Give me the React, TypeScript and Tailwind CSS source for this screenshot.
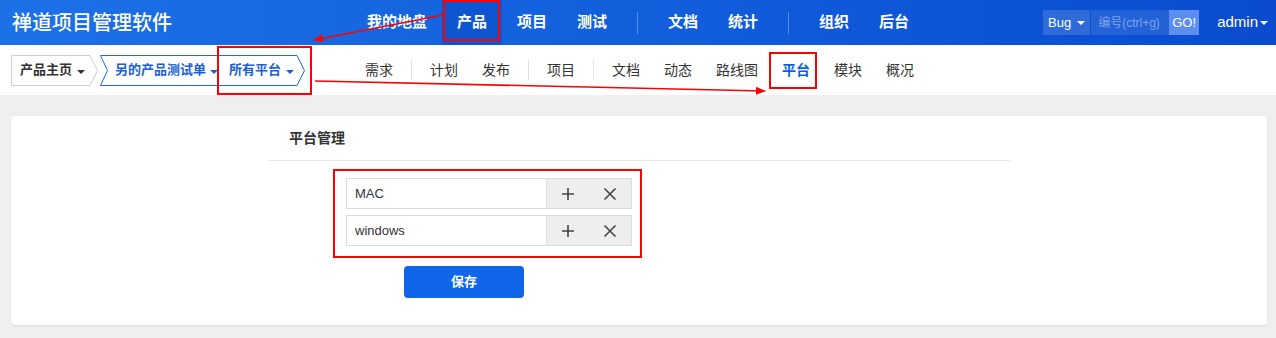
import React from 'react';

const cjk = "font-['Liberation_Sans','Noto_Sans_CJK_SC',sans-serif]";

const topNav = [
    { label: '我的地盘' },
    { label: '产品', active: true },
    { label: '项目' },
    { label: '测试' },
    { sep: true },
    { label: '文档' },
    { label: '统计' },
    { sep: true },
    { label: '组织' },
    { label: '后台' },
];

const subNav = [
    { label: '需求' },
    { sep: true },
    { label: '计划' },
    { label: '发布' },
    { sep: true },
    { label: '项目' },
    { sep: true },
    { label: '文档' },
    { label: '动态' },
    { label: '路线图' },
    { label: '平台', active: true },
    { label: '模块' },
    { label: '概况' },
];

const platforms = ['MAC', 'windows'];

const Caret = () => (
    <span className="inline-block w-0 h-0 border-x-[4px] border-x-transparent border-t-[4px] border-t-current" />
);

export default function App() {
    return (
        <div className={`relative w-[1276px] h-[338px] overflow-hidden bg-[#efefef] ${cjk}`}>
            {/* header */}
            <header className="grid grid-cols-[1fr_auto_1fr] items-center h-[45px] bg-linear-to-r from-[#1d71e7] to-[#0a4bd0] text-white">
                <div className="pl-[12px] text-[20px] font-medium leading-none">禅道项目管理软件</div>
                <nav className="flex items-center h-full">
                    {topNav.map((item, i) =>
                        item.sep ? (
                            <span key={i} className="mx-[15px] w-px h-[22px] bg-white/30" />
                        ) : (
                            <a
                                key={i}
                                className={`flex items-center h-full px-[15px] text-[15px] font-bold ${item.active ? 'bg-[#0d56cf]' : ''}`}
                            >
                                {item.label}
                            </a>
                        )
                    )}
                </nav>
                <div className="flex items-center justify-end pr-[8px]">
                    <div className="flex items-center h-[25px]">
                        <div className="flex items-center gap-[6px] h-full px-[5px] bg-white/15 text-[13px] font-medium">
                            Bug <Caret />
                        </div>
                        <div className="flex items-center h-full w-[78px] ml-px pl-[7px] bg-white/10 text-[12px] text-[#7ea3ea]">
                            编号(ctrl+g)
                        </div>
                        <div className="flex items-center justify-center h-full w-[30px] bg-[#5b8ef0] text-[13px]">GO!</div>
                    </div>
                    <div className="flex items-center gap-[2px] ml-[18px] text-[15px]">
                        admin <Caret />
                    </div>
                </div>
            </header>

            {/* sub navigation */}
            <div className="grid grid-cols-[1fr_auto_1fr] items-center h-[50px] bg-white">
                <div className="flex items-center pl-[11px] h-[31px] text-[13px] font-bold">
                    <div className="relative flex items-center gap-[5px] w-[88px] h-full pl-[9px] text-[#333]">
                        <svg className="absolute inset-0" width="88" height="31" viewBox="0 0 88 31">
                            <path d="M0.5 0.5 H79 L86.5 15.5 L79 30.5 H0.5 Z" fill="white" stroke="#cfcfcf" />
                        </svg>
                        <span className="relative">产品主页</span>
                        <span className="relative"><Caret /></span>
                    </div>
                    <div className="relative flex items-center w-[206px] h-full ml-[1px] pl-[15px] font-semibold text-[#1b5fd9]">
                        <svg className="absolute inset-0" width="206" height="31" viewBox="0 0 206 31">
                            <path d="M0.5 0.5 H197 L204.5 15.5 L197 30.5 H0.5 L7.5 15.5 Z" fill="white" stroke="#1d68e3" />
                        </svg>
                        <span className="relative">另的产品测试单</span>
                        <span className="relative ml-[4px]"><Caret /></span>
                        <span className="relative ml-[11px]">所有平台</span>
                        <span className="relative ml-[5px]"><Caret /></span>
                    </div>
                </div>
                <nav className="flex items-center pl-[3px]">
                    {subNav.map((item, i) =>
                        item.sep ? (
                            <span key={i} className="mx-[6px] w-px h-[20px] bg-[#e2e2e2]" />
                        ) : (
                            <a
                                key={i}
                                className={`px-[12px] text-[14px] ${item.active ? 'font-bold text-[#0c5fe0]' : 'text-[#333]'}`}
                            >
                                {item.label}
                            </a>
                        )
                    )}
                </nav>
                <div />
            </div>

            {/* main */}
            <main className="pt-[21px] pl-[11px] pr-[9px]">
                <div className="h-[209px] bg-white rounded-[4px] shadow-[0_1px_2px_rgba(0,0,0,0.08)]">
                    <div className="w-[742px] mx-auto">
                        <div className="flex items-center h-[45px] pl-[21px] border-b border-[#e8e8e8] text-[14px] font-bold text-[#333]">
                            平台管理
                        </div>
                        <div className="flex flex-col gap-[6px] w-[286px] mt-[17px] ml-[78px]">
                            {platforms.map((p) => (
                                <div key={p} className="flex h-[31px]">
                                    <div className="flex items-center flex-1 pl-[8px] border border-[#dcdcdc] text-[13px] text-[#333]">
                                        {p}
                                    </div>
                                    <div className="flex w-[85px] bg-[#eeeeee] border border-l-0 border-[#dcdcdc] text-[#444]">
                                        <button className="flex items-center justify-center flex-1">
                                            <svg width="14" height="14" viewBox="0 0 14 14" stroke="currentColor" strokeWidth="1.6">
                                                <path d="M7 1v12M1 7h12" />
                                            </svg>
                                        </button>
                                        <button className="flex items-center justify-center flex-1">
                                            <svg width="14" height="14" viewBox="0 0 14 14" stroke="currentColor" strokeWidth="1.6">
                                                <path d="M1.5 1.5l11 11M12.5 1.5l-11 11" />
                                            </svg>
                                        </button>
                                    </div>
                                </div>
                            ))}
                        </div>
                        <button className="flex items-center justify-center w-[120px] h-[32px] mt-[20px] ml-[136px] rounded-[4px] bg-[#0f66e9] text-white text-[13px] font-bold">
                            保存
                        </button>
                    </div>
                </div>
            </main>

            {/* red annotations */}
            <svg className="absolute inset-0 pointer-events-none" width="1276" height="338" viewBox="0 0 1276 338">
                <defs>
                    <marker id="head" markerWidth="10" markerHeight="8" refX="9" refY="4" orient="auto" markerUnits="userSpaceOnUse">
                        <path d="M0 0 L10 4 L0 8 Z" fill="#f00" />
                    </marker>
                </defs>
                <g fill="none" stroke="#f00" strokeWidth="2">
                    <rect x="444" y="1" width="55" height="39" />
                    <rect x="218" y="47" width="93" height="47" />
                    <rect x="770" y="53" width="46" height="35" />
                    <rect x="334" y="170" width="307" height="87" />
                    <line x1="443" y1="15" x2="314" y2="40" strokeWidth="1.6" markerEnd="url(#head)" />
                    <line x1="315" y1="81" x2="765" y2="91" strokeWidth="1.6" markerEnd="url(#head)" />
                </g>
            </svg>
        </div>
    );
}
